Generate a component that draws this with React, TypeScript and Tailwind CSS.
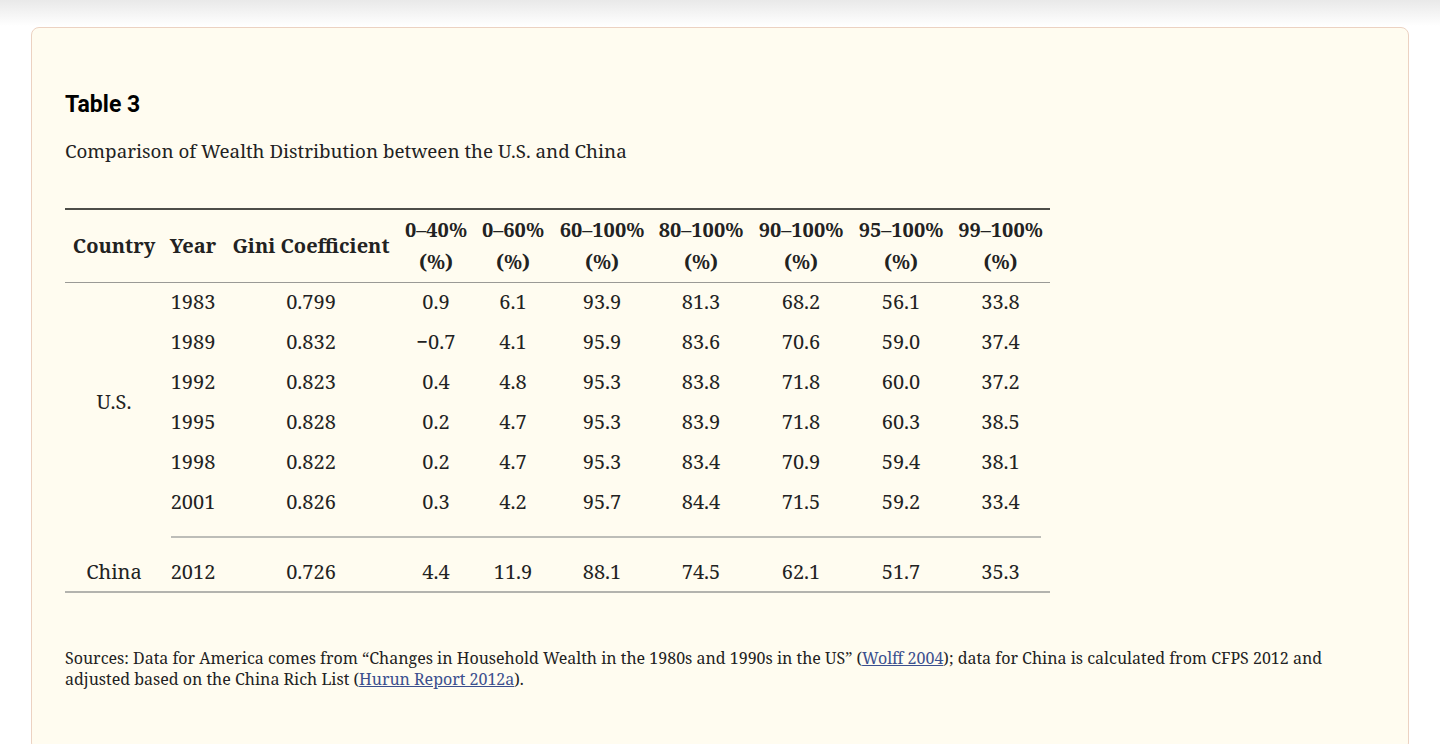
import React from "react";

const serif = { fontFamily: '"Noto Serif", "DejaVu Serif", serif' };

const cols = ["w-[98px]", "w-[60px]", "w-[176px]", "w-[74px]", "w-[80px]", "w-[98px]", "w-[100px]", "w-[100px]", "w-[100px]", "w-[99px]"];

const usRows = [
  ["1983", "0.799", "0.9", "6.1", "93.9", "81.3", "68.2", "56.1", "33.8"],
  ["1989", "0.832", "\u22120.7", "4.1", "95.9", "83.6", "70.6", "59.0", "37.4"],
  ["1992", "0.823", "0.4", "4.8", "95.3", "83.8", "71.8", "60.0", "37.2"],
  ["1995", "0.828", "0.2", "4.7", "95.3", "83.9", "71.8", "60.3", "38.5"],
  ["1998", "0.822", "0.2", "4.7", "95.3", "83.4", "70.9", "59.4", "38.1"],
  ["2001", "0.826", "0.3", "4.2", "95.7", "84.4", "71.5", "59.2", "33.4"],
];
const china = ["2012", "0.726", "4.4", "11.9", "88.1", "74.5", "62.1", "51.7", "35.3"];

const pct = ["0\u201340%", "0\u201360%", "60\u2013100%", "80\u2013100%", "90\u2013100%", "95\u2013100%", "99\u2013100%"];

export default function App() {
  return (
    <div className="h-[744px] bg-white relative overflow-hidden">
      <div className="h-[26px] bg-gradient-to-b from-[#e9e9e9] to-white" />
      <div className="mx-[31px] mt-px border border-[#ecd2c2] rounded-[8px] bg-[#fffcf0] pl-[33px] pr-[33px] pt-[62px] pb-[60px]">
        <h2 className="text-[23px] leading-[30px] font-bold text-black" style={{ fontFamily: "Roboto, sans-serif" }}>
          Table 3
        </h2>
        <p className="mt-[18px] text-[18.8px] leading-[26px] text-[#222]" style={serif}>
          Comparison of Wealth Distribution between the U.S. and China
        </p>
        <table className="mt-[44px] border-collapse table-fixed w-[985px] text-[20px] text-[#222]" style={serif}>
          <colgroup>
            {cols.map((c, i) => (
              <col key={i} className={c} />
            ))}
          </colgroup>
          <thead>
            <tr className="border-t-2 border-t-[#4d4d48] border-b border-b-[#9a9a96]">
              <th className="font-bold text-center align-middle leading-[32px] py-[4px] h-[73px] whitespace-nowrap">Country</th>
              <th className="font-bold text-center align-middle leading-[32px]">Year</th>
              <th className="font-bold text-center align-middle leading-[32px] whitespace-nowrap">Gini Coefficient</th>
              {pct.map((p) => (
                <th key={p} className="font-bold text-center align-middle leading-[32px] whitespace-nowrap">
                  {p}
                  <br />
                  (%)
                </th>
              ))}
            </tr>
          </thead>
          <tbody>
            {usRows.map((r, i) => (
              <tr key={r[0]} className="h-[40px]">
                {i === 0 && (
                  <td rowSpan={6} className="text-center align-middle">
                    U.S.
                  </td>
                )}
                {r.map((v, j) => (
                  <td key={j} className="text-center align-middle leading-[24px]">
                    {v}
                  </td>
                ))}
              </tr>
            ))}
            <tr className="h-[30px]">
              <td />
              <td colSpan={9} className="pl-[8px] pr-[9px] align-middle">
                <div className="h-[2px] bg-[#bdbdb8]" />
              </td>
            </tr>
            <tr className="h-[40px] border-b-2 border-b-[#b3b3ae]">
              <td className="text-center align-middle">China</td>
              {china.map((v, j) => (
                <td key={j} className="text-center align-middle leading-[24px]">
                  {v}
                </td>
              ))}
            </tr>
          </tbody>
        </table>
        <p className="mt-[55px] text-[16px] leading-[21px] text-[#222] whitespace-nowrap" style={serif}>
          Sources: Data for America comes from {"\u201C"}Changes in Household Wealth in the 1980s and 1990s in the US{"\u201D"} (
          <a className="text-[#3b4f8e] underline">Wolff 2004</a>); data for China is calculated from CFPS 2012 and
          <br />
          adjusted based on the China Rich List (<a className="text-[#3b4f8e] underline">Hurun Report 2012a</a>).
        </p>
      </div>
    </div>
  );
}
